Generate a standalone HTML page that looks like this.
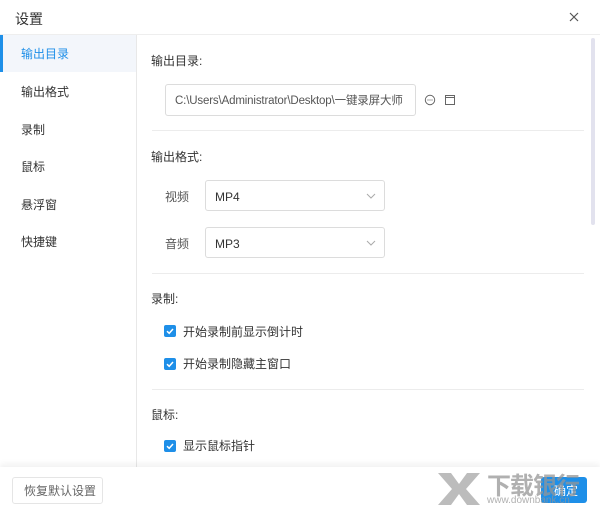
<!DOCTYPE html>
<html><head><meta charset="utf-8"><style>
*{margin:0;padding:0;box-sizing:border-box}
body{width:600px;height:513px;overflow:hidden;background:#fff;font-family:"Liberation Sans","Noto Sans CJK SC",sans-serif;color:#333;position:relative}
.a{position:absolute}
.t{font-size:12px;white-space:nowrap;line-height:14px}
.box{border:1px solid #dcdcdc;border-radius:3px;background:#fff}
.cb{width:12px;height:12px;background:#1e8fe8;border-radius:2px}
.hr{height:1px;background:#ececec}
</style></head><body>
<div class="a" style="left:15px;top:9px;font-size:14px;color:#333">设置</div>
<svg class="a" style="left:569px;top:12px" width="10" height="10"><path d="M1 1L9 9M9 1L1 9" stroke="#555" stroke-width="1.2"/></svg>
<div class="a" style="left:0;top:34px;width:600px;height:1px;background:#eee"></div>
<div class="a" style="left:136px;top:35px;width:1px;height:432px;background:#e8e8e8"></div>
<div class="a" style="left:0;top:35px;width:136px;height:37px;background:#f3f6fb"></div>
<div class="a" style="left:0;top:35px;width:3px;height:37px;background:#1e8fe8"></div>
<div class="a t" style="left:21px;top:47px;color:#1e8fe8">输出目录</div>
<div class="a t" style="left:21px;top:85px">输出格式</div>
<div class="a t" style="left:21px;top:123px">录制</div>
<div class="a t" style="left:21px;top:160px">鼠标</div>
<div class="a t" style="left:21px;top:198px">悬浮窗</div>
<div class="a t" style="left:21px;top:235px">快捷键</div>
<div class="a" style="left:591px;top:38px;width:4px;height:187px;background:#e2e2ee;border-radius:2px"></div>

<div class="a t" style="left:151px;top:54px">输出目录:</div>
<div class="a box" style="left:165px;top:84px;width:251px;height:32px"></div>
<div class="a t" style="left:175px;top:94px;color:#555;font-size:11.5px;letter-spacing:-0.15px">C:\Users\Administrator\Desktop\一键录屏大师</div>
<svg class="a" style="left:424px;top:94px" width="32" height="12"><circle cx="6" cy="6" r="4.7" fill="none" stroke="#666" stroke-width="1"/><circle cx="4" cy="6" r=".6" fill="#666"/><circle cx="6" cy="6" r=".6" fill="#666"/><circle cx="8" cy="6" r=".6" fill="#666"/><rect x="21.5" y="1.5" width="9" height="9" fill="none" stroke="#666"/><path d="M21.5 3.5H30.5" stroke="#666"/></svg>
<div class="a hr" style="left:152px;top:130px;width:432px"></div>

<div class="a t" style="left:151px;top:150px">输出格式:</div>
<div class="a t" style="left:165px;top:190px;color:#555">视频</div>
<div class="a box" style="left:205px;top:180px;width:180px;height:31px"></div>
<div class="a t" style="left:215px;top:190px">MP4</div>
<svg class="a" style="left:366px;top:193px" width="10" height="6"><path d="M1 1L5 5L9 1" fill="none" stroke="#aaa"/></svg>
<div class="a t" style="left:165px;top:237px;color:#555">音频</div>
<div class="a box" style="left:205px;top:227px;width:180px;height:31px"></div>
<div class="a t" style="left:215px;top:237px">MP3</div>
<svg class="a" style="left:366px;top:240px" width="10" height="6"><path d="M1 1L5 5L9 1" fill="none" stroke="#aaa"/></svg>
<div class="a hr" style="left:152px;top:273px;width:432px"></div>

<div class="a t" style="left:151px;top:292px">录制:</div>
<svg class="a cb" style="left:164px;top:325px" width="12" height="12"><path d="M3 6.2L5.2 8.3L9 4" fill="none" stroke="#fff" stroke-width="1.5"/></svg>
<div class="a t" style="left:183px;top:325px">开始录制前显示倒计时</div>
<svg class="a cb" style="left:164px;top:358px" width="12" height="12"><path d="M3 6.2L5.2 8.3L9 4" fill="none" stroke="#fff" stroke-width="1.5"/></svg>
<div class="a t" style="left:183px;top:357px">开始录制隐藏主窗口</div>
<div class="a hr" style="left:152px;top:389px;width:432px"></div>
<div class="a t" style="left:151px;top:408px">鼠标:</div>
<svg class="a cb" style="left:164px;top:440px" width="12" height="12"><path d="M3 6.2L5.2 8.3L9 4" fill="none" stroke="#fff" stroke-width="1.5"/></svg>
<div class="a t" style="left:183px;top:439px">显示鼠标指针</div>

<div class="a" style="left:0;top:467px;width:600px;height:46px;background:#fff;box-shadow:0 -3px 6px rgba(0,0,0,.06)"></div>
<div class="a box" style="left:12px;top:477px;width:91px;height:27px;border-color:#e5e5e5"></div>
<div class="a t" style="left:24px;top:484px;color:#666">恢复默认设置</div>
<div class="a" style="left:541px;top:477px;width:46px;height:26px;background:#1e8fe8;border-radius:3px"></div>
<div class="a t" style="left:554px;top:484px;color:#fff">确定</div>
<div class="a" style="left:487px;top:466px;font-size:24px;font-weight:bold;color:rgba(150,150,150,.75);letter-spacing:-1px">下载银行</div>
<div class="a" style="left:487px;top:495px;font-size:10px;color:rgba(150,150,150,.75)">www.downbank.cn</div>
<svg class="a" style="left:436px;top:471px" width="46" height="36"><path d="M2 2H15L23 13L31 2H44L30 18L44 34H31L23 23L15 34H2L16 18Z" fill="rgba(160,160,160,.7)"/></svg>
</body></html>
